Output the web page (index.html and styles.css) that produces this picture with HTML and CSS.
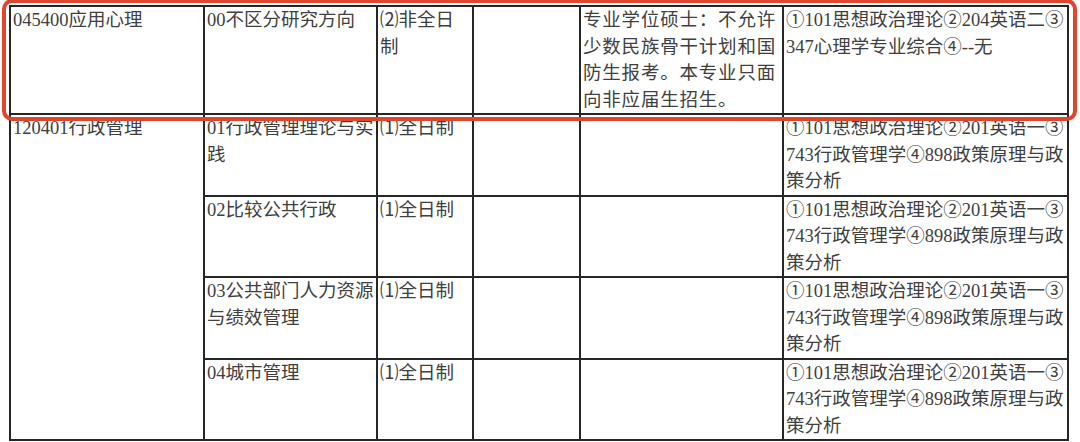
FILE: index.html
```html
<!DOCTYPE html>
<html>
<head>
<meta charset="utf-8">
<title>专业目录</title>
<link rel="stylesheet" href="styles.css">
</head>
<body>
<div class="page">
  <table class="catalog">
    <colgroup>
      <col class="c1"><col class="c2"><col class="c3"><col class="c4"><col class="c5"><col class="c6">
    </colgroup>
    <tr class="r1">
      <td>045400应用心理</td>
      <td>00不区分研究方向</td>
      <td>⑵非全日<br>制</td>
      <td></td>
      <td class="note">专业学位硕士：不允许<br>少数民族骨干计划和国<br>防生报考。本专业只面<br>向非应届生招生。</td>
      <td>①101思想政治理论②204英语二③<br>347心理学专业综合④--无</td>
    </tr>
    <tr class="r">
      <td rowspan="4">120401行政管理</td>
      <td>01行政管理理论与实<br>践</td>
      <td>⑴全日制</td>
      <td></td>
      <td></td>
      <td>①101思想政治理论②201英语一③<br>743行政管理学④898政策原理与政<br>策分析</td>
    </tr>
    <tr class="r">
      <td>02比较公共行政</td>
      <td>⑴全日制</td>
      <td></td>
      <td></td>
      <td>①101思想政治理论②201英语一③<br>743行政管理学④898政策原理与政<br>策分析</td>
    </tr>
    <tr class="r">
      <td>03公共部门人力资源<br>与绩效管理</td>
      <td>⑴全日制</td>
      <td></td>
      <td></td>
      <td>①101思想政治理论②201英语一③<br>743行政管理学④898政策原理与政<br>策分析</td>
    </tr>
    <tr class="r">
      <td>04城市管理</td>
      <td>⑴全日制</td>
      <td></td>
      <td></td>
      <td>①101思想政治理论②201英语一③<br>743行政管理学④898政策原理与政<br>策分析</td>
    </tr>
  </table>
  <div class="highlight"></div>
</div>
</body>
</html>
```

FILE: styles.css
```css
html, body {
  margin: 0;
  padding: 0;
  background: #ffffff;
}

.page {
  position: relative;
  width: 1080px;
  height: 442px;
  overflow: hidden;
  padding: 5px 0 0 9px;
  box-sizing: border-box;
}

.catalog {
  border-collapse: collapse;
  table-layout: fixed;
  width: 1060px;
  font-family: "Liberation Serif", "Noto Sans CJK SC", serif;
  font-size: 18.5px;
  line-height: 26.5px;
  color: #404040;
}

.c1 { width: 194px; }
.c2 { width: 173px; }
.c3 { width: 96px; }
.c4 { width: 107px; }
.c5 { width: 203px; }
.c6 { width: 285px; }

.catalog td {
  border: 2px solid #262626;
  padding: 0 0 0 2px;
  vertical-align: top;
  white-space: nowrap;
  overflow: hidden;
}

.r1 td { height: 106px; }
.r td { height: 79px; }

.note {
  letter-spacing: 0.8px;
}

.highlight {
  position: absolute;
  left: 2px;
  top: -1px;
  width: 1075px;
  height: 122px;
  box-sizing: border-box;
  border: 4px solid #e0452d;
  border-radius: 10px;
  pointer-events: none;
}
```
